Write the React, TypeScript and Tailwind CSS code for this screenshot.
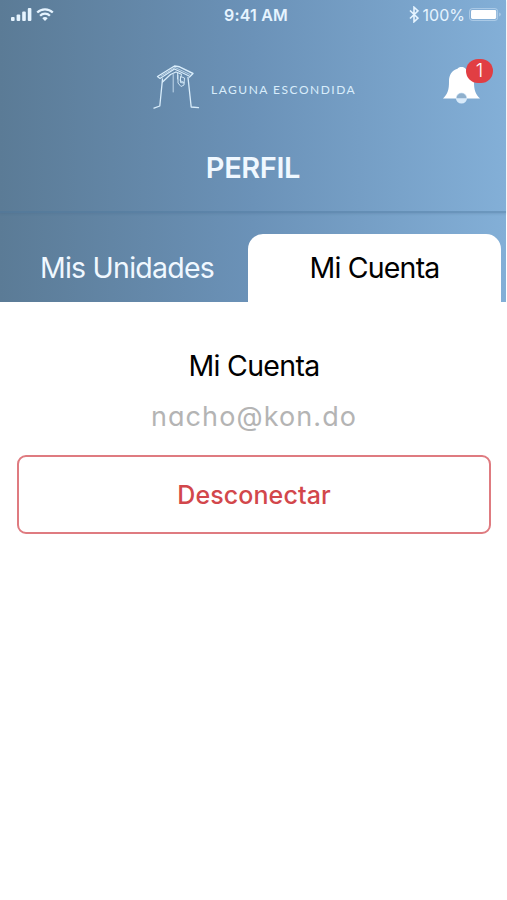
interface TabProps {
  label: string;
  active?: boolean;
}

const SignalIcon = () => (
  <svg className="h-[13px] w-[21px]" viewBox="0 0 21 13" fill="currentColor">
    <rect x="0" y="9" width="3.6" height="4" rx="1" />
    <rect x="5.6" y="6.6" width="3.6" height="6.4" rx="1" />
    <rect x="11.2" y="3.6" width="3.6" height="9.4" rx="1" />
    <rect x="16.8" y="0" width="3.6" height="13" rx="1" />
  </svg>
);

const WifiIcon = () => (
  <svg className="h-[13px] w-[18px]" viewBox="0 0 18 13" fill="none">
    <path
      d="M1.2 4.6C5.4.2 12.6.2 16.8 4.6M4.1 7.8c2.7-2.8 7.1-2.8 9.8 0"
      stroke="currentColor"
      strokeWidth="2.2"
    />
    <path
      d="M9 13 6.3 10.2c1.5-1.5 3.9-1.5 5.4 0z"
      fill="currentColor"
    />
  </svg>
);

const BluetoothIcon = () => (
  <svg className="h-[17px] w-[10px]" viewBox="0 0 10 17" fill="none">
    <path
      d="m1 4.5 8 7.6-4 3.7V1.2l4 3.7-8 7.6"
      stroke="currentColor"
      strokeWidth="1.6"
    />
  </svg>
);

const BatteryIcon = () => (
  <svg className="h-[13px] w-[33px]" viewBox="0 0 33 13">
    <rect
      x=".6"
      y=".6"
      width="28"
      height="11.8"
      rx="2.6"
      fill="none"
      stroke="#bdd7ee"
      strokeOpacity=".75"
    />
    <rect x="2" y="2" width="25.2" height="9" rx="1.4" fill="white" />
    <path d="M30.4 4.6c1.6.5 1.6 3.3 0 3.8z" fill="#bdd7ee" />
  </svg>
);

const HutLogo = () => (
  <svg
    className="h-[46px] w-[48px]"
    viewBox="0 0 48 46"
    fill="none"
    stroke="#d9edfb"
    strokeLinecap="round"
    strokeLinejoin="round"
  >
    <path d="M4.5 11.5 21.5 1l5 .8L40 8.5 36.5 12" strokeWidth="1.4" />
    <path d="M4.5 11.5 7 13.5 21.5 4 36 11" strokeWidth="1.1" />
    <path d="M8 11 22 2.5 37 9.5" strokeWidth=".7" />
    <path d="M9.5 14 6.8 41 1 43.2" strokeWidth="1.3" />
    <path d="M35 12.5 38.2 42l7.3.7" strokeWidth="1.3" />
    <path d="m9.5 17 8-7.5L23 7l5 2" strokeWidth="1.3" />
    <path d="M20.2 9.5V27M24.5 8v6" strokeWidth=".8" />
    <path
      d="M25 10v8l3 3.5 3-1.5.5-7-4-1.5v6l3 .5M28.5 9.5l-1.5 6 4 2"
      strokeWidth=".9"
    />
  </svg>
);

const BellIcon = () => (
  <svg className="h-[38px] w-[37px]" viewBox="0 0 37 38">
    <path
      d="M18.5 0c2 0 3.3.6 4 1.8C28.2 3.5 31 8 31 14.500c0 8.500 1.200 12 6 17H0c4.800-5 6-8.500 6-17C6 8 8.800 3.500 14.500 1.800 15.200.6 16.500 0 18.500 0z"
      fill="white"
    />
    <circle cx="18.5" cy="31" r="5.6" fill="#d8eafa" />
    <path d="M13.5 31.200a5 5 0 0 1 10 0z" fill="#8fb0cd" />
  </svg>
);

const StatusBar = () => (
  <div className="grid h-[30px] grid-cols-3 items-center pr-[3px] pl-[11px] text-[#e6f4ff]">
    <div className="flex items-center gap-1 pb-0.5">
      <SignalIcon />
      <WifiIcon />
    </div>
    <span className="pr-[2px] pb-px text-center text-[16px] font-semibold tracking-[0.2px]">
      9:41 AM
    </span>
    <div className="flex items-center justify-end pr-px pb-px whitespace-nowrap">
      <BluetoothIcon />
      <span className="mr-[4px] ml-[4px] text-[16px]">100%</span>
      <BatteryIcon />
    </div>
  </div>
);

const Tab = ({ label, active }: TabProps) => (
  <button
    className={`h-[68px] pt-px text-[28.5px] whitespace-nowrap ${
      active
        ? "w-[253px] rounded-t-[15px] bg-white tracking-[-0.8px] text-black"
        : "grow pl-[6px] tracking-[-0.75px] text-[#f0f8ff]"
    }`}
  >
    {label}
  </button>
);

export default function App() {
  return (
    <div className="min-h-[900px] w-[507px] overflow-hidden bg-white font-['Inter',sans-serif]">
      <div className="mr-px h-[302px] bg-linear-to-r from-[#5b7b96] via-[#6b92b8] to-[#83afd7]">
        <header className="flex h-[213px] flex-col border-b-2 border-[#4a769c]/40 shadow-[0_1px_2px_rgba(60,95,130,0.2)]">
          <StatusBar />
          <div className="relative flex h-[105px] items-center pt-[10px] pl-[153px]">
            <HutLogo />
            <span className="mt-[4px] ml-[10px] font-['Lato','Inter',sans-serif] text-[12px] tracking-[1.5px] whitespace-nowrap text-[#d9edfb]">
              LAGUNA ESCONDIDA
            </span>
            <div className="absolute top-[37px] left-[443px]">
              <BellIcon />
              <span className="absolute -top-[8px] left-[23px] flex h-[24px] w-[27px] items-center justify-center rounded-full bg-[#e13e43] pt-px text-[19px] font-light text-white">
                1
              </span>
            </div>
          </div>
          <h1 className="pt-[11px] text-center text-[29px] leading-[44px] font-semibold tracking-[-0.4px] text-[#f0f8ff]">
            PERFIL
          </h1>
        </header>
        <nav className="flex h-[89px] items-end pr-[5px]">
          <Tab label="Mis Unidades" />
          <Tab label="Mi Cuenta" active />
        </nav>
      </div>
      <main className="flex flex-col items-center pt-[44px] pr-[16px] pl-[17px]">
        <h2 className="text-[28.5px] leading-[40px] tracking-[-0.7px] text-black">
          Mi Cuenta
        </h2>
        <p className="mt-[11px] text-[27px] leading-[40px] tracking-[1.1px] text-[#b4b4b4] [font-feature-settings:'cv11']">
          nacho@kon.do
        </p>
        <button className="mt-[18px] h-[79px] w-full rounded-[9px] border-2 border-[#df7b80] pt-[2px] text-[25px] font-medium tracking-[0.1px] text-[#d2474b]">
          Desconectar
        </button>
      </main>
    </div>
  );
}
